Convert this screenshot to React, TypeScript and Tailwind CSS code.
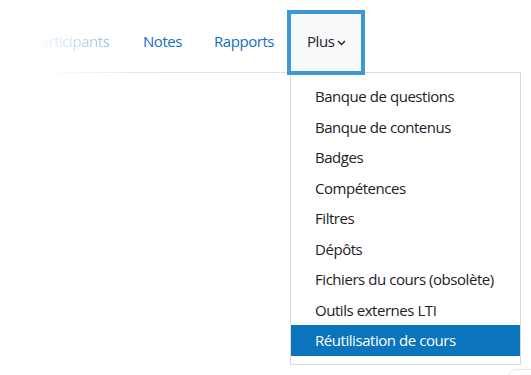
const menuItems = [
  "Banque de questions",
  "Banque de contenus",
  "Badges",
  "Compétences",
  "Filtres",
  "Dépôts",
  "Fichiers du cours (obsolète)",
  "Outils externes LTI",
  "Réutilisation de cours",
];

export default function App() {
  return (
    <div
      className="relative w-[531px] h-[375px] overflow-hidden bg-white text-[15px] leading-[22.5px] tracking-[-0.45px] text-[#1d2125]"
      style={{ fontFamily: '"Open Sans", "Noto Sans", sans-serif' }}
    >
      {/* secondary navigation */}
      <div className="relative mt-[10px] h-[62px]">
        <nav className="flex h-full pl-4">
          <div className="w-[111px] h-[62px] flex items-center px-4">
            <span className="whitespace-nowrap bg-[linear-gradient(to_right,rgba(15,108,191,0)_5%,rgba(15,108,191,0.45)_100%)] bg-clip-text text-transparent">
              Participants
            </span>
          </div>
          <div className="w-[71px] h-[62px] flex items-center px-4 text-[#1170c4]">Notes</div>
          <div className="w-[89px] h-[62px] flex items-center px-4 text-[#1170c4] whitespace-nowrap">Rapports</div>
          <div className="relative z-20 w-[78px] h-[65px] flex items-center pl-4 border-4 border-[#3d98d3] bg-[#f8f9fa] -mb-[3px]">
            <div className="flex items-center gap-[3px] pb-[2px]">
              <span>Plus</span>
              <svg width="9" height="6" viewBox="0 0 9 6" className="mt-[2px]">
                <polyline points="1,1 4.5,4.5 8,1" fill="none" stroke="#1d2125" strokeWidth="1.4" />
              </svg>
            </div>
          </div>
        </nav>
        <div className="absolute left-0 bottom-[-1px] w-[300px] h-px bg-[linear-gradient(to_right,rgba(222,226,230,0)_12%,#dee2e6_55%)]" />
      </div>

      {/* dropdown menu */}
      <div className="absolute z-10 left-[290px] top-[72px] w-[231px] border border-[#d7d9db] bg-white py-2">
        {menuItems.map((item, i) => (
          <div
            key={item}
            className={
              i === menuItems.length - 1
                ? "px-6 py-1 whitespace-nowrap bg-[#0a74bd] text-white"
                : "px-6 py-1 whitespace-nowrap"
            }
          >
            {item}
          </div>
        ))}
      </div>

      <div className="absolute left-[508px] top-[369px] w-[40px] h-[30px] rounded-lg border border-[#e3e5e7]" />
    </div>
  );
}
